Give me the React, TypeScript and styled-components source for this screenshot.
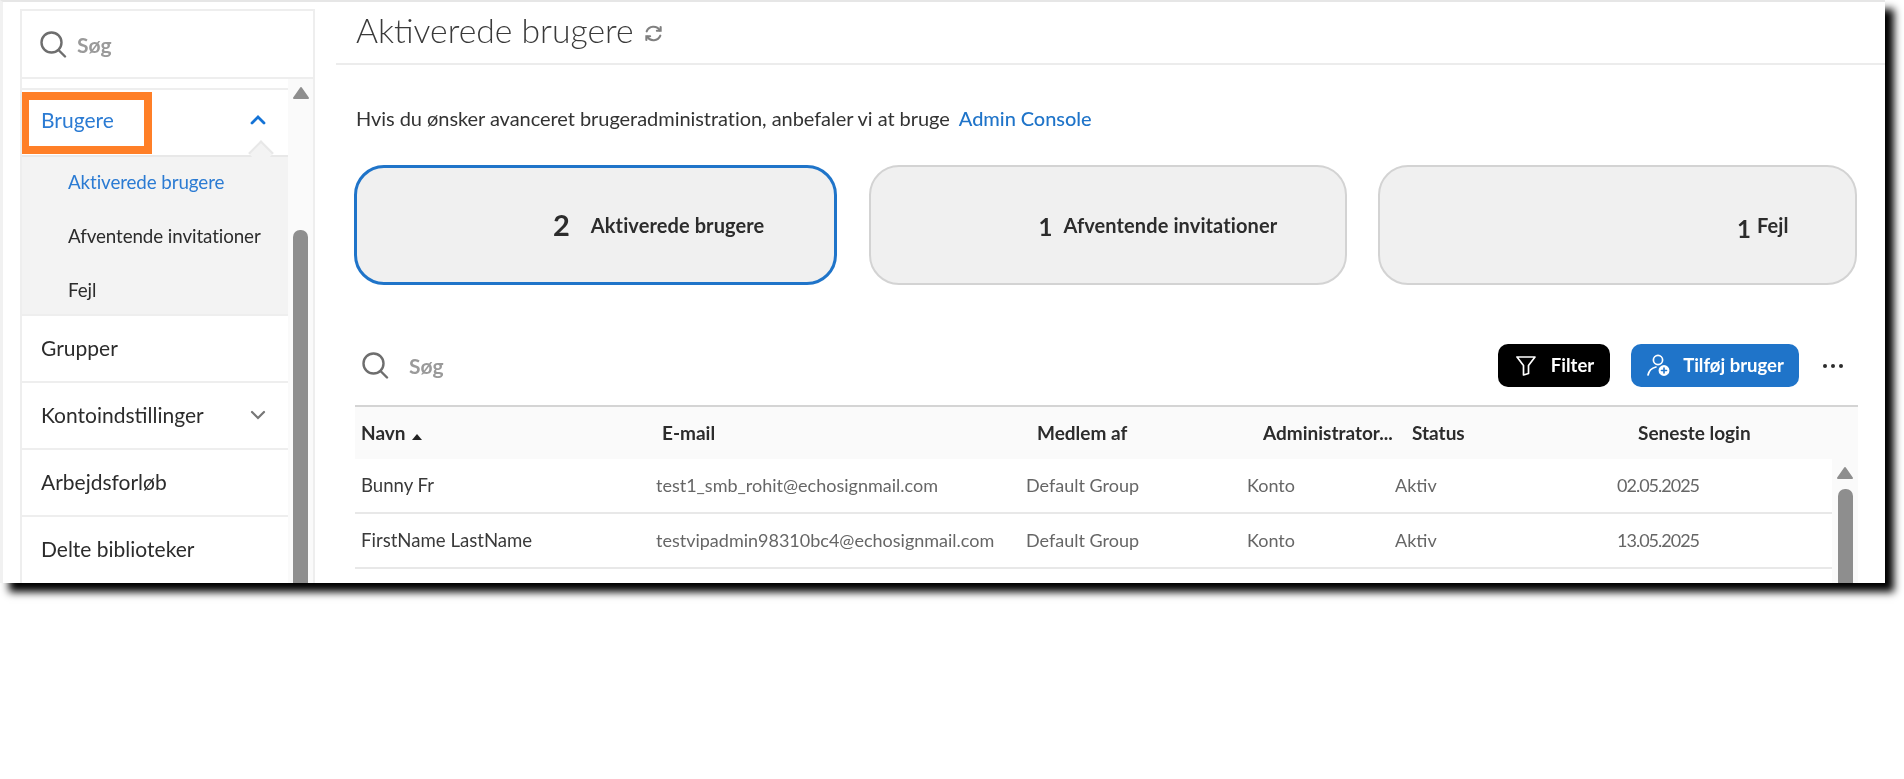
import React from 'react';
import styled, { createGlobalStyle } from 'styled-components';

const GlobalStyle = createGlobalStyle`
	html, body {
		margin: 0;
		padding: 0;
		background: #fff;
		font-family: Lato, "Noto Sans", sans-serif;
		color: #2c2c2c;
	}
`;

const Page = styled.div`
	height: 779px;
	overflow: hidden;
`;

const Window = styled.div`
	display: flex;
	box-sizing: border-box;
	width: 1885px;
	height: 583px;
	background: #fff;
	border-top: 2px solid #e6e6e6;
	border-left: 3px solid #f1f1f1;
	box-shadow: 9px 9px 8px #000;
	filter: blur(0.35px);
`;

const Sidebar = styled.aside`
	display: flex;
	flex-direction: column;
	flex: none;
	box-sizing: border-box;
	width: 295px;
	margin: 7px 0 0 17px;
	border-left: 2px solid #eeeeee;
	border-right: 2px solid #eeeeee;
	overflow: hidden;
`;

const SideSearch = styled.div`
	display: flex;
	align-items: center;
	gap: 10px;
	flex: none;
	height: 66px;
	padding-left: 17px;
	border-top: 2px solid #eeeeee;
	border-bottom: 2px solid #eeeeee;
`;

const SearchIcon = styled.svg`
	flex: none;
	width: 28px;
	height: 28px;
	fill: none;
	stroke: #6e6e6e;
	stroke-width: 2.4;
	stroke-linecap: round;
`;

const SearchHint = styled.span`
	font-size: 21px;
	font-weight: 700;
	color: #9a9a9a;
`;

const SideBody = styled.div`
	display: flex;
	flex: 1;
	min-height: 0;
`;

const NavList = styled.nav`
	flex: 1;
	padding-top: 9px;
`;

const NavRow = styled.div<{ $active?: boolean }>`
	position: relative;
	display: flex;
	align-items: center;
	justify-content: space-between;
	box-sizing: content-box;
	height: ${(p) => (p.$active ? 59 : 63)}px;
	padding: 0 22px ${(p) => (p.$active ? 6 : 2)}px 19px;
	border-top: 2px solid #eeeeee;
	font-size: 21px;
	color: ${(p) => (p.$active ? '#2b7bd3' : '#2c2c2c')};
`;

const Highlight = styled.span`
	position: absolute;
	left: -1px;
	top: 2px;
	width: 131px;
	height: 62px;
	box-sizing: border-box;
	border: 8px solid #ff7f27;
`;

const Notch = styled.span`
	position: absolute;
	right: 18px;
	bottom: -7px;
	width: 16px;
	height: 16px;
	background: #f3f3f3;
	border-top: 2px solid #e8e8e8;
	border-left: 2px solid #e8e8e8;
	transform: rotate(45deg);
`;

const SubMenu = styled.div`
	display: flex;
	flex-direction: column;
	box-sizing: border-box;
	height: 159px;
	padding: 0 0 0 46px;
	background: #f3f3f3;
	border-top: 2px solid #e8e8e8;
`;

const SubItem = styled.div<{ $active?: boolean }>`
	display: flex;
	align-items: center;
	flex: none;
	box-sizing: border-box;
	height: 54px;
	padding-bottom: 5px;
	font-size: 18.8px;
	letter-spacing: -0.1px;
	color: ${(p) => (p.$active ? '#2b7bd3' : '#2c2c2c')};
`;

const Track = styled.div<{ $width: number; $top: number; $gap: number }>`
	display: flex;
	flex-direction: column;
	align-items: center;
	flex: none;
	box-sizing: border-box;
	width: ${(p) => p.$width}px;
	padding-top: ${(p) => p.$top}px;
	gap: ${(p) => p.$gap}px;
	background: #fafafa;
`;

const TrackArrow = styled.svg`
	flex: none;
	width: 18px;
	height: 14px;
	fill: #8e8e8e;
	stroke: #8e8e8e;
	stroke-width: 2;
	stroke-linejoin: round;
`;

const TrackThumb = styled.div`
	flex: 1;
	width: 15px;
	border-radius: 7px 7px 0 0;
	background: #8e8e8e;
`;

const Main = styled.main`
	flex: 1;
	min-width: 0;
	overflow: hidden;
	padding-left: 21px;
`;

const TitleBar = styled.header`
	display: flex;
	align-items: center;
	gap: 9px;
	box-sizing: border-box;
	height: 63px;
	padding: 0 0 5px 20px;
	border-bottom: 2px solid #ececec;
`;

const Title = styled.h1`
	margin: 0;
	font-size: 33.7px;
	font-weight: 300;
	color: #3a3a3a;
`;

const RefreshIcon = styled.svg`
	width: 21px;
	height: 21px;
	margin-top: 6px;
	fill: none;
	stroke: #808080;
	stroke-width: 2;
	stroke-linecap: round;
`;

const Content = styled.div`
	box-sizing: border-box;
	width: 1503px;
	margin-left: 19px;
`;

const Notice = styled.p`
	display: flex;
	gap: 9px;
	margin: 40px 0 0 1px;
	height: 26px;
	line-height: 26px;
	font-size: 20px;
	letter-spacing: -0.05px;
	color: #333;
`;

const NoticeLink = styled.a`
	color: #1f74c9;
	font-weight: 500;
`;

const Cards = styled.div`
	display: flex;
	gap: 31.5px;
	margin: 34px 0 0 -1px;
`;

const Card = styled.div<{ $active?: boolean; $width: number; $indent: number; $gap: number }>`
	display: flex;
	align-items: center;
	gap: ${(p) => p.$gap}px;
	flex: none;
	box-sizing: border-box;
	width: ${(p) => p.$width}px;
	height: 120px;
	padding-left: ${(p) => p.$indent}px;
	background: #f0f0f0;
	border: ${(p) => (p.$active ? '3px solid #1f74c9' : '2px solid #d3d3d3')};
	border-radius: 30px;
`;

const CardCount = styled.span<{ $size: number; $drop: number }>`
	position: relative;
	top: ${(p) => p.$drop}px;
	font-size: ${(p) => p.$size}px;
	font-weight: 700;
	color: #2c2c2c;
`;

const CardLabel = styled.span`
	font-size: 20px;
	font-weight: 700;
	letter-spacing: 0.1px;
`;

const Toolbar = styled.div`
	display: flex;
	align-items: center;
	height: 56px;
	margin-top: 52px;
	padding-left: 6px;
`;

const ToolSearch = styled.div`
	display: flex;
	align-items: center;
	gap: 20px;
	flex: 1;
`;

const ToolButton = styled.button<{ $primary?: boolean; $width: number }>`
	display: flex;
	align-items: center;
	justify-content: center;
	gap: 13px;
	width: ${(p) => p.$width}px;
	height: 43px;
	margin-right: 21px;
	padding: 0;
	border: none;
	border-radius: 10px;
	font-family: inherit;
	font-size: 18.5px;
	font-weight: 700;
	color: #fff;
	background: ${(p) => (p.$primary ? '#1f74c9' : '#000')};
`;

const ButtonIcon = styled.svg`
	width: 24px;
	height: 24px;
	fill: none;
	stroke: #fff;
	stroke-width: 1.7;
	stroke-linecap: round;
	stroke-linejoin: round;
`;

const MoreDots = styled.div`
	display: flex;
	gap: 4px;
	margin: 2px 15px 0 3px;
`;

const Dot = styled.span`
	width: 4px;
	height: 4px;
	border-radius: 50%;
	background: #2c2c2c;
`;

const COLUMNS = '295px 370px 221px 148px 222px 1fr';

const HeaderRow = styled.div`
	display: grid;
	grid-template-columns: ${COLUMNS};
	align-items: center;
	box-sizing: border-box;
	height: 54px;
	margin-top: 12px;
	padding: 0 0 2px 6px;
	background: #fafafa;
	border-top: 2px solid #d4d4d4;
`;

const HeaderCell = styled.div<{ $shift?: number }>`
	padding-left: ${(p) => p.$shift || 0}px;
	font-size: 19px;
	font-weight: 700;
	white-space: nowrap;
	color: #2c2c2c;
`;

const SortMark = styled.span`
	display: inline-block;
	margin-left: 6px;
	border-left: 5px solid transparent;
	border-right: 5px solid transparent;
	border-bottom: 6px solid #222;
`;

const TableBody = styled.div`
	display: flex;
	height: 124px;
`;

const Rows = styled.div`
	flex: 1;
`;

const Row = styled.div`
	display: grid;
	grid-template-columns: ${COLUMNS};
	align-items: center;
	box-sizing: border-box;
	height: 55px;
	padding: 0 0 2px 6px;
	border-bottom: 2px solid #e8e8e8;
`;

const NameCell = styled.div`
	font-size: 18.6px;
	color: #3a3a3a;
`;

const Cell = styled.div<{ $spacing?: number }>`
	font-size: 18px;
	letter-spacing: ${(p) => p.$spacing || 0}px;
	white-space: nowrap;
	color: #666;
`;

const Search = () => (
	<SearchIcon viewBox="0 0 28 28">
		<circle cx="12.5" cy="12.5" r="10" />
		<line x1="19.5" y1="20" x2="26" y2="26.5" />
	</SearchIcon>
);

const ArrowUp = () => (
	<TrackArrow viewBox="0 0 18 14">
		<path d="M9 2 L16 12 H2 Z" />
	</TrackArrow>
);

const ChevronUp = () => (
	<svg width="16" height="10" viewBox="0 0 16 10" fill="none" stroke="#1473d6" strokeWidth="2.8" strokeLinecap="round">
		<path d="M2 8 L8 2 L14 8" />
	</svg>
);

const ChevronDown = () => (
	<svg width="16" height="10" viewBox="0 0 16 10" fill="none" stroke="#777" strokeWidth="2.2" strokeLinecap="round">
		<path d="M2 2 L8 8 L14 2" />
	</svg>
);

const users = [
	{ name: 'Bunny Fr', email: 'test1_smb_rohit@echosignmail.com', group: 'Default Group', date: '02.05.2025' },
	{ name: 'FirstName LastName', email: 'testvipadmin98310bc4@echosignmail.com', group: 'Default Group', date: '13.05.2025' },
];

const App = () => {
	return (
		<Page>
			<GlobalStyle />
			<Window>
				<Sidebar>
					<SideSearch>
						<Search />
						<SearchHint>Søg</SearchHint>
					</SideSearch>
					<SideBody>
						<NavList>
							<NavRow $active>
								Brugere
								<ChevronUp />
								<Highlight />
								<Notch />
							</NavRow>
							<SubMenu>
								<SubItem $active>Aktiverede brugere</SubItem>
								<SubItem>Afventende invitationer</SubItem>
								<SubItem>Fejl</SubItem>
							</SubMenu>
							<NavRow>Grupper</NavRow>
							<NavRow>
								Kontoindstillinger
								<ChevronDown />
							</NavRow>
							<NavRow>Arbejdsforløb</NavRow>
							<NavRow>Delte biblioteker</NavRow>
						</NavList>
						<Track $width={25} $top={7} $gap={130}>
							<ArrowUp />
							<TrackThumb />
						</Track>
					</SideBody>
				</Sidebar>
				<Main>
					<TitleBar>
						<Title>Aktiverede brugere</Title>
						<RefreshIcon viewBox="0 0 20 20">
							<path d="M3.5 8 A7 7 0 0 1 16 7" />
							<path d="M16.5 12 A7 7 0 0 1 4 13" />
							<path d="M16.8 3.8 V7.4 H13.2" />
							<path d="M3.2 16.2 V12.6 H6.8" />
						</RefreshIcon>
					</TitleBar>
					<Content>
						<Notice>
							Hvis du ønsker avanceret brugeradministration, anbefaler vi at bruge
							<NoticeLink>Admin Console</NoticeLink>
						</Notice>
						<Cards>
							<Card $active $width={483} $indent={196} $gap={21}>
								<CardCount $size={29} $drop={-1}>2</CardCount>
								<CardLabel>Aktiverede brugere</CardLabel>
							</Card>
							<Card $width={478} $indent={168} $gap={11}>
								<CardCount $size={24} $drop={1}>1</CardCount>
								<CardLabel>Afventende invitationer</CardLabel>
							</Card>
							<Card $width={479} $indent={357} $gap={6}>
								<CardCount $size={24} $drop={3}>1</CardCount>
								<CardLabel>Fejl</CardLabel>
							</Card>
						</Cards>
						<Toolbar>
							<ToolSearch>
								<Search />
								<SearchHint>Søg</SearchHint>
							</ToolSearch>
							<ToolButton $width={112}>
								<ButtonIcon viewBox="0 0 24 24">
									<path d="M3 4 H21 L14.5 12.5 V20.5 L9.5 22 V12.5 Z" />
								</ButtonIcon>
								Filter
							</ToolButton>
							<ToolButton $primary $width={168}>
								<ButtonIcon viewBox="0 0 24 24">
									<circle cx="12" cy="7" r="4.6" />
									<path d="M2 22 C3 17 6 15 10 14" />
									<circle cx="18" cy="17.5" r="4.6" fill="#fff" />
									<path d="M18 15 V20 M15.5 17.5 H20.5" stroke="#1f74c9" strokeWidth="1.6" />
								</ButtonIcon>
								Tilføj bruger
							</ToolButton>
							<MoreDots>
								<Dot />
								<Dot />
								<Dot />
							</MoreDots>
						</Toolbar>
						<HeaderRow>
							<HeaderCell>
								Navn
								<SortMark />
							</HeaderCell>
							<HeaderCell $shift={6}>E-mail</HeaderCell>
							<HeaderCell $shift={11}>Medlem af</HeaderCell>
							<HeaderCell $shift={16}>Administrator...</HeaderCell>
							<HeaderCell $shift={17}>Status</HeaderCell>
							<HeaderCell $shift={21}>Seneste login</HeaderCell>
						</HeaderRow>
						<TableBody>
							<Rows>
								{users.map((user) => (
									<Row key={user.email}>
										<NameCell>{user.name}</NameCell>
										<Cell>{user.email}</Cell>
										<Cell>{user.group}</Cell>
										<Cell>Konto</Cell>
										<Cell>Aktiv</Cell>
										<Cell $spacing={-1}>{user.date}</Cell>
									</Row>
								))}
							</Rows>
							<Track $width={26} $top={7} $gap={9}>
								<ArrowUp />
								<TrackThumb />
							</Track>
						</TableBody>
					</Content>
				</Main>
			</Window>
		</Page>
	);
};

export default App;
